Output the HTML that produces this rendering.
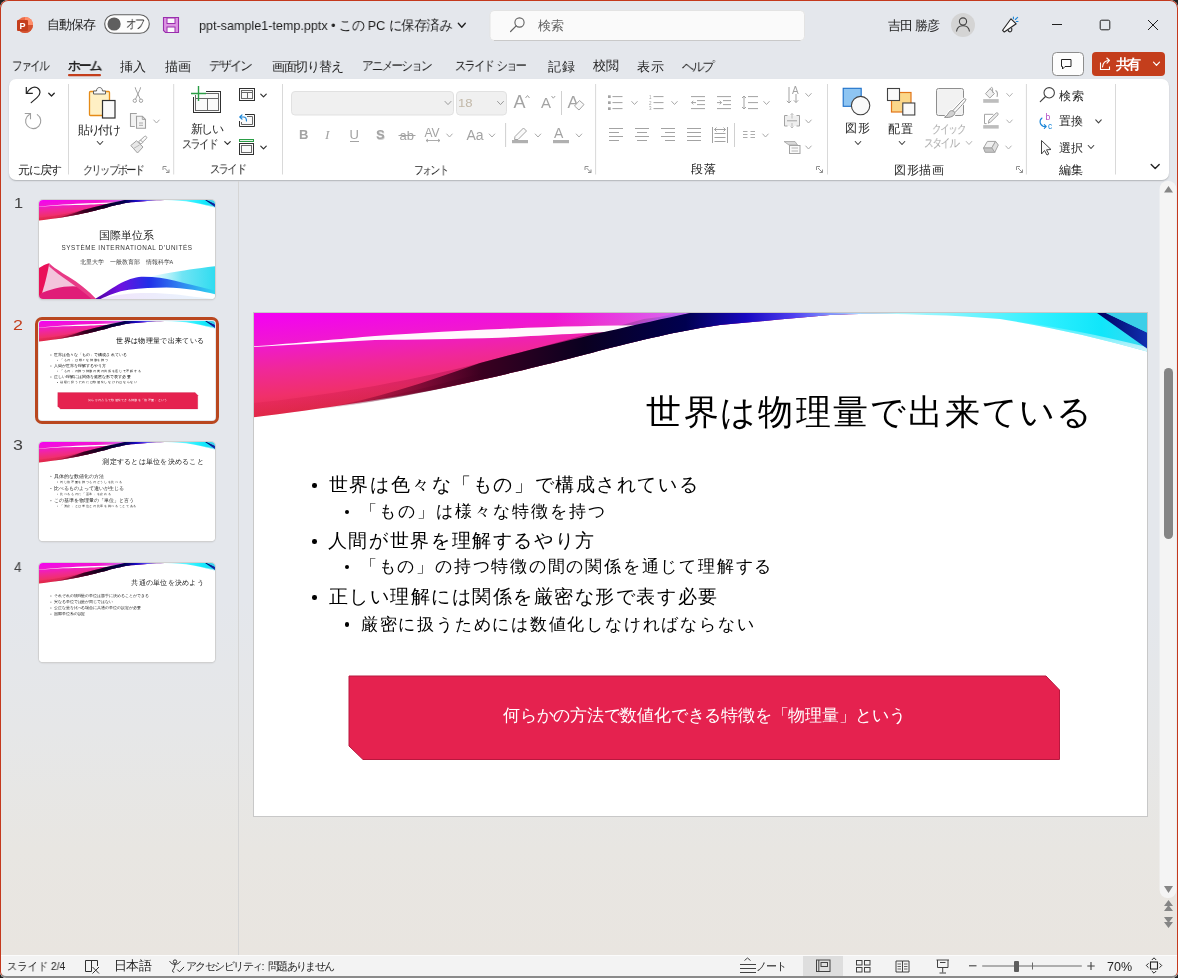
<!DOCTYPE html><html lang="ja"><head><meta charset="utf-8"><style>
html,body{margin:0;padding:0;width:1178px;height:978px;overflow:hidden;background:#202020;}
body{font-family:"Liberation Sans",sans-serif;color:#242424;position:relative;}
.abs{position:absolute;}
.t{position:absolute;white-space:nowrap;line-height:1;will-change:transform;}
.t i{display:inline-block;width:var(--w);text-align:center;font-style:normal}
#win{position:absolute;left:0;top:0;width:1178px;height:978px;border-radius:8px 8px 6px 6px;overflow:hidden;
 background:linear-gradient(180deg,#e4e7ec 0px,#e4e7ec 600px,#e6e7e8 730px,#e8e6e2 850px,#e9e5e0 955px);}
#ribbon{position:absolute;left:9px;top:79px;width:1160px;height:101px;background:#fff;border-radius:7px;box-shadow:0 1px 1.5px rgba(0,0,0,0.22);}
.sep{position:absolute;width:1px;background:#dadada;}
.slide{position:absolute;width:893px;height:503px;background:#fff;overflow:hidden;}
.thumb{position:absolute;left:39px;width:176px;height:99px;border-radius:4px;overflow:hidden;box-shadow:0 0 0 1px #d0d0d0,0 1px 2px rgba(0,0,0,0.15);background:#fff;}
.thumb .slide{transform:scale(0.19709);transform-origin:0 0;left:0;top:0}
svg{overflow:visible}

#border{position:absolute;left:0;top:0;width:1178px;height:978px;box-sizing:border-box;border:1px solid #c4391d;border-bottom:2px solid #8a8a8a;border-radius:8px 8px 6px 6px;pointer-events:none}
</style></head><body><div id="win"><div id="ribbon"></div><svg class="abs" style="left:0;top:0;z-index:2" width="1178" height="182"><rect x="68.0" y="84" width="1" height="90.5" fill="#d9d9d9"/><rect x="173.2" y="84" width="1" height="90.5" fill="#d9d9d9"/><rect x="282.0" y="84" width="1" height="90.5" fill="#d9d9d9"/><rect x="595.1" y="84" width="1" height="90.5" fill="#d9d9d9"/><rect x="827.0" y="84" width="1" height="90.5" fill="#d9d9d9"/><rect x="1025.9" y="84" width="1" height="90.5" fill="#d9d9d9"/><rect x="1115.0" y="84" width="1" height="90.5" fill="#d9d9d9"/><path d="M26.3,87 V93.3 H32.8" fill="none" stroke="#242424" stroke-width="1.2" stroke-linecap="butt" stroke-linejoin="miter"/><path d="M26.8,93 C29,89.6 31.5,87.2 34.6,87.2 C37.8,87.2 40,89.6 40,92.3 C40,94.5 38.8,96 37,97.6 L31.2,102.6" fill="none" stroke="#242424" stroke-width="1.2" stroke-linecap="round"/><path d="M48.75,93.19999999999999 L51.5,96.0 L54.25,93.19999999999999" fill="none" stroke="#242424" stroke-width="1.3" stroke-linecap="round" stroke-linejoin="round"/><path d="M37.3,114.6 A7.6,7.6 0 1 1 29.4,114.4 L30.3,113.7" fill="none" stroke="#9e9e9e" stroke-width="1.1" stroke-linecap="round"/><path d="M25.3,113.5 H30.5 V118.7" fill="none" stroke="#9e9e9e" stroke-width="1.1" stroke-linecap="square" stroke-linejoin="miter"/><rect x="89.5" y="91.5" width="20" height="24" rx="1" fill="#fff0c4" stroke="#e58b17" stroke-width="1.3"/><path d="M93.5,94 V91 H96.5 C96.5,88.5 98,87.5 99.5,87.5 C101,87.5 102.5,88.5 102.5,91 H105.5 V94 Z" fill="#fafafa" stroke="#616161" stroke-width="1"/><rect x="102.5" y="100.5" width="12.5" height="17.5" fill="#fafafa" stroke="#303030" stroke-width="1.2"/><path d="M97.25,141.5 L100,144.5 L102.75,141.5" fill="none" stroke="#424242" stroke-width="1.1" stroke-linecap="round" stroke-linejoin="round"/><circle cx="134.8" cy="100.7" r="1.7" fill="none" stroke="#a0a0a0" stroke-width="1"/><circle cx="141" cy="100.7" r="1.7" fill="none" stroke="#a0a0a0" stroke-width="1"/><path d="M135.5,99.2 L140,89.5 L140.6,87.3 M140.3,99.2 L135.8,89.5 L135.2,87.3" fill="none" stroke="#a0a0a0" stroke-width="1"/><path d="M134.8,126.5 H130.5 V113.5 H136.8" fill="#f2f2f2" stroke="#a0a0a0" stroke-width="1.1"/><path d="M136.5,116.3 H142.3 L145.5,119.5 V128.3 H136.5 Z" fill="#f4f4f4" stroke="#a0a0a0" stroke-width="1.1"/><path d="M142.3,116.3 V119.5 H145.5" fill="none" stroke="#a0a0a0" stroke-width="0.9"/><path d="M139,123 H143 M139,125.3 H143" stroke="#a0a0a0" stroke-width="0.9"/><path d="M153.75,120.0 L156.5,123.0 L159.25,120.0" fill="none" stroke="#a8a8a8" stroke-width="1" stroke-linecap="round" stroke-linejoin="round"/><path d="M130.8,145.5 L136.5,140.8 L143,147 L137.5,153 Z" fill="#e8e8e8" stroke="#a0a0a0" stroke-width="1"/><path d="M133.5,148.5 L139.5,145" stroke="#b8b8b8" stroke-width="1"/><path d="M138.5,141.8 L140.5,140 L142.8,142.3 L141,144.2 Z M140.2,140.4 L144.3,136.6 A1.3,1.3 0 0 1 146.3,138.6 L142.3,142.4" fill="#fafafa" stroke="#a0a0a0" stroke-width="1"/><rect x="193.5" y="91.5" width="27" height="21" fill="#fafafa" stroke="#303030" stroke-width="1"/><rect x="195.5" y="93.5" width="23" height="17" fill="none" stroke="#6a6a6a" stroke-width="1"/><path d="M195.5,98.5 H218.5 M207.5,98.5 V110.5" stroke="#6a6a6a" stroke-width="1"/><rect x="188" y="84" width="18" height="11" fill="#ffffff"/><rect x="191" y="92" width="4" height="5" fill="#ffffff"/><path d="M191,93.5 H206 M198.5,86 V101" stroke="#2a9d45" stroke-width="1.4"/><path d="M224.75,141.6 L227.5,144.4 L230.25,141.6" fill="none" stroke="#303030" stroke-width="1.2" stroke-linecap="round" stroke-linejoin="round"/><rect x="239.5" y="88.5" width="15" height="12" fill="#fafafa" stroke="#303030" stroke-width="1"/><rect x="241.5" y="90.5" width="11" height="8" fill="none" stroke="#6a6a6a" stroke-width="1"/><path d="M241.5,92.5 H252.5 M247.5,92.5 V98.5" stroke="#6a6a6a" stroke-width="1"/><path d="M260.75,94.1 L263.5,96.9 L266.25,94.1" fill="none" stroke="#303030" stroke-width="1.2" stroke-linecap="round" stroke-linejoin="round"/><path d="M245,114.5 H254.5 V126.5 H239.5 V121" fill="#fafafa" stroke="#303030" stroke-width="1"/><path d="M241.5,122 V124.5 H252.5 V116.5 H247" fill="none" stroke="#6a6a6a" stroke-width="1"/><path d="M242,114.8 L239.8,117 L242,119.2 M240,117 H243.5 C245.5,117 246.5,118.5 246.5,121" fill="none" stroke="#1a86d8" stroke-width="1.2" stroke-linecap="round" stroke-linejoin="round"/><rect x="239.5" y="139.5" width="14" height="2" fill="#e8f4ea" stroke="#2a9d45" stroke-width="1"/><rect x="239.5" y="143.5" width="14" height="11" fill="#fafafa" stroke="#303030" stroke-width="1"/><rect x="241.5" y="145.5" width="10" height="7" fill="none" stroke="#6a6a6a" stroke-width="1"/><path d="M260.75,146.1 L263.5,148.9 L266.25,146.1" fill="none" stroke="#303030" stroke-width="1.2" stroke-linecap="round" stroke-linejoin="round"/><path d="M163.0,170 V166.5 H166.5" fill="none" stroke="#8f8f8f" stroke-width="1"/><path d="M164.5,168 L169.0,172.5 M169.0,169.5 V172.5 H166.0" fill="none" stroke="#8f8f8f" stroke-width="1"/><rect x="291.5" y="91.5" width="162" height="23.5" rx="3.5" fill="#f0f0f0" stroke="#e1e1e1" stroke-width="1"/><path d="M445.0,101.4 L448,104.6 L451.0,101.4" fill="none" stroke="#9a9a9a" stroke-width="1" stroke-linecap="round" stroke-linejoin="round"/><rect x="456.5" y="91.5" width="50" height="23.5" rx="3.5" fill="#f0f0f0" stroke="#e1e1e1" stroke-width="1"/><path d="M497.5,101.4 L500.5,104.6 L503.5,101.4" fill="none" stroke="#9a9a9a" stroke-width="1" stroke-linecap="round" stroke-linejoin="round"/><text x="513.5" y="108.3" font-family="Liberation Sans" font-size="18" fill="#a3a3a3">A</text><path d="M525.5,98 L527.5,95.5 L529.5,98" fill="none" stroke="#a3a3a3" stroke-width="1"/><text x="541" y="108.3" font-family="Liberation Sans" font-size="15" fill="#a3a3a3">A</text><path d="M551.5,96 L553.3,98.2 L555.2,96" fill="none" stroke="#a3a3a3" stroke-width="1"/><rect x="561.0" y="91" width="1" height="24" fill="#d0d0d0"/><text x="567.5" y="108.3" font-family="Liberation Sans" font-size="17" fill="#a3a3a3">A</text><path d="M574.5,106 L579.5,100.5 L584,104.5 L579,110 Z" fill="#fafafa" stroke="#a3a3a3" stroke-width="1"/><text x="299" y="139.2" font-family="Liberation Sans" font-weight="700" font-size="13" fill="#a3a3a3">B</text><text x="325" y="139.2" font-family="Liberation Serif" font-style="italic" font-size="13.5" fill="#a3a3a3">I</text><text x="349.5" y="139" font-family="Liberation Sans" font-size="13" fill="#a3a3a3">U</text><rect x="350" y="141" width="9" height="1" fill="#a3a3a3"/><text x="376.5" y="140" font-family="Liberation Sans" font-weight="700" font-size="13" fill="#d0d0d0">S</text><text x="376" y="139.2" font-family="Liberation Sans" font-weight="700" font-size="13" fill="#a3a3a3">S</text><text x="399.5" y="139.5" font-family="Liberation Sans" font-size="13" fill="#a3a3a3">ab</text><rect x="398.5" y="135" width="17" height="1" fill="#a3a3a3"/><text x="424.5" y="137" font-family="Liberation Sans" font-size="12" fill="#a3a3a3">AV</text><path d="M426,140.5 H440 M428,139 L426,140.5 L428,142 M438,139 L440,140.5 L438,142" fill="none" stroke="#a3a3a3" stroke-width="0.9"/><path d="M446.75,134.0 L449.5,137.0 L452.25,134.0" fill="none" stroke="#a8a8a8" stroke-width="1" stroke-linecap="round" stroke-linejoin="round"/><text x="466.5" y="140" font-family="Liberation Sans" font-size="14" fill="#a3a3a3">Aa</text><path d="M489.25,134.0 L492,137.0 L494.75,134.0" fill="none" stroke="#a8a8a8" stroke-width="1" stroke-linecap="round" stroke-linejoin="round"/><rect x="505.1" y="123" width="1" height="24" fill="#d0d0d0"/><path d="M515,136.5 L523.5,128 L526.5,131 L518,139.5 L514.5,139.5 Z" fill="#fafafa" stroke="#a3a3a3" stroke-width="1"/><rect x="512" y="140" width="16" height="3.2" fill="#b0b0b0"/><path d="M535.25,134.0 L538,137.0 L540.75,134.0" fill="none" stroke="#a8a8a8" stroke-width="1" stroke-linecap="round" stroke-linejoin="round"/><text x="554" y="137.8" font-family="Liberation Sans" font-size="14" fill="#a3a3a3">A</text><rect x="553" y="140" width="16" height="3.2" fill="#b0b0b0"/><path d="M576.25,134.0 L579,137.0 L581.75,134.0" fill="none" stroke="#a8a8a8" stroke-width="1" stroke-linecap="round" stroke-linejoin="round"/><path d="M585.0,170 V166.5 H588.5" fill="none" stroke="#8f8f8f" stroke-width="1"/><path d="M586.5,168 L591.0,172.5 M591.0,169.5 V172.5 H588.0" fill="none" stroke="#8f8f8f" stroke-width="1"/><rect x="608" y="95.3" width="2.7" height="2.7" fill="#a3a3a3"/><rect x="608" y="101.3" width="2.7" height="2.7" fill="#a3a3a3"/><rect x="608" y="107.3" width="2.7" height="2.7" fill="#a3a3a3"/><path d="M612.5,96.6 H622.5 M612.5,102.6 H622.5 M612.5,108.6 H622.5" stroke="#a3a3a3" stroke-width="1"/><path d="M631.75,101.5 L634.5,104.5 L637.25,101.5" fill="none" stroke="#a8a8a8" stroke-width="1" stroke-linecap="round" stroke-linejoin="round"/><text x="649" y="98.5" font-family="Liberation Sans" font-size="4.5" fill="#a3a3a3">1</text><text x="649" y="104.5" font-family="Liberation Sans" font-size="4.5" fill="#a3a3a3">2</text><text x="649" y="110.3" font-family="Liberation Sans" font-size="4.5" fill="#a3a3a3">3</text><path d="M653.5,96.6 H663.5 M653.5,102.6 H663.5 M653.5,108.6 H663.5" stroke="#a3a3a3" stroke-width="1"/><path d="M671.75,101.5 L674.5,104.5 L677.25,101.5" fill="none" stroke="#a8a8a8" stroke-width="1" stroke-linecap="round" stroke-linejoin="round"/><path d="M691,96.6 H705 M697,100.6 H705 M697,104.6 H705 M691,108.6 H705 M691.5,102.6 H696 M693.3,100.8 L691.5,102.6 L693.3,104.4" fill="none" stroke="#a3a3a3" stroke-width="1"/><path d="M717,96.6 H731 M723,100.6 H731 M723,104.6 H731 M717,108.6 H731 M717,102.6 H721.5 M719.7,100.8 L721.5,102.6 L719.7,104.4" fill="none" stroke="#a3a3a3" stroke-width="1"/><path d="M744,96 V109 M742,98 L744,96 L746,98 M742,107 L744,109 L746,107 M748,96.6 H758 M748,102.6 H758 M748,108.6 H758" fill="none" stroke="#a3a3a3" stroke-width="1"/><path d="M763.75,101.5 L766.5,104.5 L769.25,101.5" fill="none" stroke="#a8a8a8" stroke-width="1" stroke-linecap="round" stroke-linejoin="round"/><rect x="609" y="128.0" width="14" height="1" fill="#a3a3a3"/><rect x="609" y="132.0" width="10" height="1" fill="#a3a3a3"/><rect x="609" y="136.0" width="14" height="1" fill="#a3a3a3"/><rect x="609" y="140.0" width="10" height="1" fill="#a3a3a3"/><rect x="635.0" y="128.0" width="14" height="1" fill="#a3a3a3"/><rect x="637.0" y="132.0" width="10" height="1" fill="#a3a3a3"/><rect x="635.0" y="136.0" width="14" height="1" fill="#a3a3a3"/><rect x="637.0" y="140.0" width="10" height="1" fill="#a3a3a3"/><rect x="661" y="128.0" width="14" height="1" fill="#a3a3a3"/><rect x="665" y="132.0" width="10" height="1" fill="#a3a3a3"/><rect x="661" y="136.0" width="14" height="1" fill="#a3a3a3"/><rect x="665" y="140.0" width="10" height="1" fill="#a3a3a3"/><rect x="687" y="128.0" width="14" height="1" fill="#a3a3a3"/><rect x="687" y="132.0" width="14" height="1" fill="#a3a3a3"/><rect x="687" y="136.0" width="14" height="1" fill="#a3a3a3"/><rect x="687" y="140.0" width="14" height="1" fill="#a3a3a3"/><path d="M712.5,127 V143 M727.5,127 V143 M714.5,133.5 H725.5 M714.5,137.5 H725.5 M714.5,141.5 H725.5 M714.5,129.5 H725.5 M716.5,127.5 L714.5,129.5 L716.5,131.5 M723.5,127.5 L725.5,129.5 L723.5,131.5" fill="none" stroke="#a3a3a3" stroke-width="1"/><rect x="734.0" y="123" width="1" height="24" fill="#d0d0d0"/><path d="M743,131.5 H747.5 M750.5,131.5 H755 M743,134.5 H747.5 M750.5,134.5 H755 M743,137.5 H747.5 M750.5,137.5 H755" stroke="#a3a3a3" stroke-width="0.9"/><path d="M762.75,134.0 L765.5,137.0 L768.25,134.0" fill="none" stroke="#a8a8a8" stroke-width="1" stroke-linecap="round" stroke-linejoin="round"/><path d="M789,87 V103 M786.8,100.8 L789,103 L791.2,100.8 M796,94 V102.5 M793.8,100.3 L796,102.5 L798.2,100.3" fill="none" stroke="#a3a3a3" stroke-width="1"/><text x="792" y="94" font-family="Liberation Sans" font-size="10" fill="#a3a3a3">A</text><path d="M805.75,93.5 L808.5,96.5 L811.25,93.5" fill="none" stroke="#a8a8a8" stroke-width="1" stroke-linecap="round" stroke-linejoin="round"/><rect x="785" y="115.5" width="14.5" height="10.5" fill="#efefef"/><path d="M787.5,115.5 H784.5 V126 H787.5 M796.5,115.5 H799.5 V126 H796.5 M787,120.8 H797" fill="none" stroke="#a3a3a3" stroke-width="1"/><path d="M792,113.5 V118.5 M790.5,115 L792,113.5 L793.5,115 M792,123 V128 M790.5,126.5 L792,128 L793.5,126.5" fill="none" stroke="#b8b8b8" stroke-width="0.9"/><path d="M805.75,120.0 L808.5,123.0 L811.25,120.0" fill="none" stroke="#a8a8a8" stroke-width="1" stroke-linecap="round" stroke-linejoin="round"/><path d="M784,141.5 H795 L797.5,145 H789 Z" fill="#d8d8d8" stroke="#a3a3a3" stroke-width="0.8"/><rect x="789.5" y="145.5" width="10.5" height="8" fill="#fafafa" stroke="#a3a3a3" stroke-width="1"/><path d="M791.5,148 H798 M791.5,151 H798" stroke="#a3a3a3" stroke-width="0.8"/><path d="M805.75,146.0 L808.5,149.0 L811.25,146.0" fill="none" stroke="#a8a8a8" stroke-width="1" stroke-linecap="round" stroke-linejoin="round"/><path d="M816.5,170 V166.5 H820" fill="none" stroke="#8f8f8f" stroke-width="1"/><path d="M818,168 L822.5,172.5 M822.5,169.5 V172.5 H819.5" fill="none" stroke="#8f8f8f" stroke-width="1"/><rect x="843.2" y="88.3" width="18" height="18" fill="#8ec5f2" stroke="#1c6fc9" stroke-width="1.1"/><circle cx="860.6" cy="105.6" r="9.2" fill="#fafafa" stroke="#424242" stroke-width="1.1"/><path d="M855.25,141.5 L858,144.5 L860.75,141.5" fill="none" stroke="#424242" stroke-width="1.1" stroke-linecap="round" stroke-linejoin="round"/><rect x="891.5" y="92.5" width="19.5" height="19.5" fill="#fbd78a" stroke="#e2761a" stroke-width="1.2"/><rect x="887.5" y="88.5" width="12" height="12" fill="#fafafa" stroke="#424242" stroke-width="1.1"/><rect x="902.8" y="103" width="12" height="12" fill="#fafafa" stroke="#424242" stroke-width="1.1"/><path d="M899.25,141.5 L902,144.5 L904.75,141.5" fill="none" stroke="#424242" stroke-width="1.1" stroke-linecap="round" stroke-linejoin="round"/><rect x="936.5" y="88.5" width="27" height="27" rx="2" fill="#f2f2f2" stroke="#8e8e8e" stroke-width="1"/><path d="M952.5,111 L963.3,99.5 C964.5,98.2 966,98.6 965.8,99.8 C965.5,101 964,103 955,112.5 C954.5,116 951,118 944.5,117.3 C947.5,115.8 948.5,112.5 949.8,111.3 C950.6,110.6 951.6,110.5 952.5,111 Z" fill="#fff" stroke="#fff" stroke-width="2.6" stroke-linejoin="round"/><path d="M952.5,111 L963.3,99.5 C964.5,98.2 966,98.6 965.8,99.8 C965.5,101 964,103 955,112.5" fill="#fafafa" stroke="#8e8e8e" stroke-width="1"/><path d="M955,112.5 C954.5,116 951,118 944.5,117.3 C947.5,115.8 948.5,112.5 949.8,111.3 C950.6,110.6 952.5,110 955,112.5 Z" fill="#d2d2d2" stroke="#8e8e8e" stroke-width="1" stroke-linejoin="round"/><path d="M966.25,141.5 L969,144.5 L971.75,141.5" fill="none" stroke="#b0b0b0" stroke-width="1" stroke-linecap="round" stroke-linejoin="round"/><path d="M985.5,93.7 L990.2,88.6 L994.4,93.7 L989.8,98 Z" fill="#efefef" stroke="#a3a3a3" stroke-width="1" stroke-linejoin="round"/><path d="M990.5,89.5 C990.5,87 992.5,86.5 992.6,89 V92.5" fill="none" stroke="#a3a3a3" stroke-width="1"/><path d="M995.5,90.5 C997.5,91.5 997.8,94 997,96.8" fill="none" stroke="#a3a3a3" stroke-width="1.1"/><rect x="983.2" y="99.1" width="15.5" height="3.7" fill="#bdbdbd"/><path d="M1006.75,93.5 L1009.5,96.5 L1012.25,93.5" fill="none" stroke="#b0b0b0" stroke-width="1" stroke-linecap="round" stroke-linejoin="round"/><path d="M993.3,114.3 H984.5 V123.6 H986.6" fill="none" stroke="#a3a3a3" stroke-width="1"/><path d="M988.3,123.3 L989,120 L996.2,113 A1.3,1.3 0 0 1 998,114.8 L990.8,121.8 Z" fill="#efefef" stroke="#a3a3a3" stroke-width="1" stroke-linejoin="round"/><rect x="983.2" y="125.1" width="15.5" height="3.5" fill="#bdbdbd"/><path d="M1006.75,120.0 L1009.5,123.0 L1012.25,120.0" fill="none" stroke="#b0b0b0" stroke-width="1" stroke-linecap="round" stroke-linejoin="round"/><path d="M983.5,148 L987.4,141.4 H995.6 L991.7,148 Z" fill="#f0f0f0" stroke="#a3a3a3" stroke-width="1" stroke-linejoin="round"/><path d="M995.6,141.4 L998.3,145 L994.8,152.3 L991.7,148 Z" fill="#e0e0e0" stroke="#a3a3a3" stroke-width="1" stroke-linejoin="round"/><path d="M983.5,148 H991.7 L994.8,152.3 H985.1 Z" fill="#c4c4c4" stroke="#a3a3a3" stroke-width="1" stroke-linejoin="round"/><path d="M1005.75,146.0 L1008.5,149.0 L1011.25,146.0" fill="none" stroke="#b0b0b0" stroke-width="1" stroke-linecap="round" stroke-linejoin="round"/><path d="M1016.5,170 V166.5 H1020" fill="none" stroke="#8f8f8f" stroke-width="1"/><path d="M1018,168 L1022.5,172.5 M1022.5,169.5 V172.5 H1019.5" fill="none" stroke="#8f8f8f" stroke-width="1"/><circle cx="1049.2" cy="92.8" r="5.2" fill="none" stroke="#424242" stroke-width="1.1"/><path d="M1045.5,96.5 L1040.3,101.7" stroke="#424242" stroke-width="1.2" stroke-linecap="round"/><text x="1045.5" y="119.8" font-family="Liberation Sans" font-size="8.5" fill="#b146c2">b</text><text x="1048" y="128.5" font-family="Liberation Sans" font-size="8.5" fill="#1a86d8">c</text><path d="M1042,118 C1039,120 1039.5,125 1043.5,126.5 L1046,126.5 M1044.3,124.6 L1046.2,126.5 L1044.3,128.4" fill="none" stroke="#1a86d8" stroke-width="1.1" stroke-linecap="round" stroke-linejoin="round"/><path d="M1041.5,140.5 L1041.5,154 L1044.5,150.5 L1047,155 L1048.8,154 L1046.5,149.8 L1051,149.5 Z" fill="#fafafa" stroke="#424242" stroke-width="1" stroke-linejoin="round"/><path d="M1095.75,119.8 L1098.5,122.8 L1101.25,119.8" fill="none" stroke="#424242" stroke-width="1.1" stroke-linecap="round" stroke-linejoin="round"/><path d="M1088.25,145.5 L1091,148.5 L1093.75,145.5" fill="none" stroke="#424242" stroke-width="1.1" stroke-linecap="round" stroke-linejoin="round"/><path d="M1151.2,164.4 L1155.2,168.6 L1159.2,164.4" fill="none" stroke="#242424" stroke-width="1.4" stroke-linecap="round" stroke-linejoin="round"/></svg><div class="abs" style="left:237.5px;top:181px;width:1px;height:774px;background:#d5d5d5"></div><div class="slide" style="left:254px;top:313px;box-shadow:0 0 0 1px #c8c8c8"><svg class="abs" style="left:0;top:0" width="893" height="120" viewBox="0 0 893 120">
<defs>
<linearGradient id="gmmain" gradientUnits="userSpaceOnUse" x1="0" y1="0" x2="8" y2="105">
 <stop offset="0" stop-color="#f400f4"/><stop offset="0.3" stop-color="#f018d0"/><stop offset="0.55" stop-color="#f02898"/><stop offset="0.8" stop-color="#f0306a"/><stop offset="1" stop-color="#e42e48"/>
</linearGradient>
<linearGradient id="gdmain" x1="0" y1="0" x2="1" y2="0">
 <stop offset="0" stop-color="#500010" stop-opacity="0"/><stop offset="0.35" stop-color="#500018" stop-opacity="0.55"/><stop offset="0.7" stop-color="#1a0010" stop-opacity="0.95"/><stop offset="1" stop-color="#000030"/>
</linearGradient>
<linearGradient id="gnmain" gradientUnits="userSpaceOnUse" x1="60" y1="0" x2="660" y2="0">
 <stop offset="0" stop-color="#800030" stop-opacity="0"/><stop offset="0.14" stop-color="#6a0028" stop-opacity="0.6"/><stop offset="0.28" stop-color="#3a0020"/><stop offset="0.45" stop-color="#0a0020"/><stop offset="0.62" stop-color="#000050"/><stop offset="0.72" stop-color="#1808c0"/><stop offset="0.8" stop-color="#5040f0"/><stop offset="0.88" stop-color="#90b0ff"/><stop offset="1" stop-color="#a0f4ff"/>
</linearGradient>
<linearGradient id="gcmain" gradientUnits="userSpaceOnUse" x1="590" y1="0" x2="893" y2="0">
 <stop offset="0" stop-color="#d8fcff"/><stop offset="0.3" stop-color="#90f6ff"/><stop offset="0.65" stop-color="#30f0ff"/><stop offset="0.85" stop-color="#10e6fa"/><stop offset="1" stop-color="#40d8f0"/>
</linearGradient>
<linearGradient id="gcwmain" gradientUnits="userSpaceOnUse" x1="0" y1="5" x2="0" y2="38">
 <stop offset="0" stop-color="#ffffff" stop-opacity="0"/><stop offset="1" stop-color="#ffffff" stop-opacity="0.75"/>
</linearGradient>
<linearGradient id="gsmain" x1="0" y1="0" x2="1" y2="0">
 <stop offset="0" stop-color="#000060"/><stop offset="1" stop-color="#1030b0"/>
</linearGradient>
<linearGradient id="gshmain" gradientUnits="userSpaceOnUse" x1="0" y1="0" x2="440" y2="0">
 <stop offset="0" stop-color="#c00030" stop-opacity="0.12"/><stop offset="0.35" stop-color="#900030" stop-opacity="0.22"/><stop offset="0.6" stop-color="#600028" stop-opacity="0.38"/><stop offset="1" stop-color="#300040" stop-opacity="0.5"/>
</linearGradient>
<linearGradient id="gsh2main" gradientUnits="userSpaceOnUse" x1="80" y1="0" x2="380" y2="0">
 <stop offset="0" stop-color="#600020" stop-opacity="0"/><stop offset="0.45" stop-color="#500018" stop-opacity="0.4"/><stop offset="1" stop-color="#200018" stop-opacity="0.7"/>
</linearGradient>
<linearGradient id="gpu2main" gradientUnits="userSpaceOnUse" x1="300" y1="0" x2="436" y2="0">
 <stop offset="0" stop-color="#e080ff" stop-opacity="0"/><stop offset="1" stop-color="#c890ff" stop-opacity="0.75"/>
</linearGradient>
<linearGradient id="gpumain" gradientUnits="userSpaceOnUse" x1="250" y1="0" x2="436" y2="0">
 <stop offset="0" stop-color="#8000c0" stop-opacity="0"/><stop offset="1" stop-color="#8000d0" stop-opacity="0.7"/>
</linearGradient>
</defs>
<path d="M0,0 L660,0 C630,0.5 600,1 576,2 C540,5 500,9 466,12 C430,17 400,24 346,37.5 C330,42 280,55 226,67 C150,84 60,97 0,104.3 Z" fill="url(#gmmain)"/>
<path d="M0,90 C60,84 150,70 226,50 C280,36 330,22 390,6 L436,0 L660,0 C630,0.5 600,1 576,2 C540,5 500,9 466,12 C430,17 400,24 346,37.5 C330,42 280,55 226,67 C150,84 60,97 0,104.3 Z" fill="url(#gshmain)"/>
<path d="M80,93 C140,84 190,70 240,57 C300,40 340,30 380,20 L466,12 C430,17 400,24 346,37.5 C330,42 280,55 226,67 C170,80 120,89 80,95 Z" fill="url(#gsh2main)"/>
<path d="M290,34 C350,20 390,9 420,0 L436,0 C380,12 330,24 290,34 Z" fill="url(#gpumain)"/>
<path d="M300,0 L436,0 C420,4 405,8 392,12 C360,12 330,13 300,14 Z" fill="url(#gpu2main)"/>
<path d="M0,33.3 C40,30.5 90,25.5 121,23 C170,19.5 210,17.5 246,16 C300,13.5 350,12.5 392,12.3 L392,17 C330,20 290,22.5 246,24.7 C200,26 160,26.5 121,27 C80,29 40,32 0,34 Z" fill="#ffffff" opacity="0.97"/>
<path d="M60,97 C120,87 175,68 226,50 C300,30 380,12 436,0 L660,0 C630,0.5 600,1 576,2 C540,5 500,9 466,12 C430,17 400,24 346,37.5 C330,42 280,55 226,67 C150,84 100,92 60,97 Z" fill="url(#gnmain)"/>
<path d="M590,0 L893,0 L893,38.5 C846,25 796,14 746,6 C700,2 650,1 590,0 Z" fill="url(#gcmain)"/>
<path d="M700,2 C760,6 820,16 893,34 L893,38.5 C846,25 796,14 746,6 C720,4 710,3 700,2 Z" fill="url(#gcwmain)"/>
<path d="M843,0 L852,0 L893,19.5 L893,35.5 Z" fill="url(#gsmain)"/>
<path d="M852,0 L893,0 L893,19.5 Z" fill="#3ccfe8"/>
</svg><div class="abs" style="left:58px;top:170.2px;width:4.6px;height:4.6px;border-radius:50%;background:#000"></div><div class="abs" style="left:58px;top:226.2px;width:4.6px;height:4.6px;border-radius:50%;background:#000"></div><div class="abs" style="left:58px;top:282.2px;width:4.6px;height:4.6px;border-radius:50%;background:#000"></div><div class="abs" style="left:91px;top:196.9px;width:4.2px;height:4.2px;border-radius:50%;background:#000"></div><div class="abs" style="left:91px;top:251.9px;width:4.2px;height:4.2px;border-radius:50%;background:#000"></div><div class="abs" style="left:91px;top:309.4px;width:4.2px;height:4.2px;border-radius:50%;background:#000"></div><svg class="abs" style="left:0;top:0" width="893" height="503"><path d="M95,363 L792,363 L805.5,377 L805.5,446.5 L109,446.5 L95,433 Z" fill="#e5224f" stroke="#b8183e" stroke-width="1"/></svg><div class="t" style="left:391.25px;top:80.50px;font-size:35.00px;--w:37.35px;color:#000000;font-weight:400;"><i>世</i><i>界</i><i>は</i><i>物</i><i>理</i><i>量</i><i>で</i><i>出</i><i>来</i><i>て</i><i>い</i><i>る</i></div><div class="t" style="left:74.08px;top:163.25px;font-size:18.50px;--w:20.59px;color:#000000;font-weight:400;"><i>世</i><i>界</i><i>は</i><i>色</i><i>々</i><i>な</i><i>「</i><i>も</i><i>の</i><i>」</i><i>で</i><i>構</i><i>成</i><i>さ</i><i>れ</i><i>て</i><i>い</i><i>る</i></div><div class="t" style="left:105.15px;top:189.50px;font-size:17.00px;--w:18.99px;color:#000000;font-weight:400;"><i>「</i><i>も</i><i>の</i><i>」</i><i>は</i><i>様</i><i>々</i><i>な</i><i>特</i><i>徴</i><i>を</i><i>持</i><i>つ</i></div><div class="t" style="left:73.08px;top:219.25px;font-size:18.50px;--w:20.64px;color:#000000;font-weight:400;"><i>人</i><i>間</i><i>が</i><i>世</i><i>界</i><i>を</i><i>理</i><i>解</i><i>す</i><i>る</i><i>や</i><i>り</i><i>方</i></div><div class="t" style="left:105.15px;top:244.50px;font-size:17.00px;--w:18.79px;color:#000000;font-weight:400;"><i>「</i><i>も</i><i>の</i><i>」</i><i>の</i><i>持</i><i>つ</i><i>特</i><i>徴</i><i>の</i><i>間</i><i>の</i><i>関</i><i>係</i><i>を</i><i>通</i><i>じ</i><i>て</i><i>理</i><i>解</i><i>す</i><i>る</i></div><div class="t" style="left:74.08px;top:275.25px;font-size:18.50px;--w:20.53px;color:#000000;font-weight:400;"><i>正</i><i>し</i><i>い</i><i>理</i><i>解</i><i>に</i><i>は</i><i>関</i><i>係</i><i>を</i><i>厳</i><i>密</i><i>な</i><i>形</i><i>で</i><i>表</i><i>す</i><i>必</i><i>要</i></div><div class="t" style="left:106.15px;top:302.50px;font-size:17.00px;--w:18.79px;color:#000000;font-weight:400;"><i>厳</i><i>密</i><i>に</i><i>扱</i><i>う</i><i>た</i><i>め</i><i>に</i><i>は</i><i>数</i><i>値</i><i>化</i><i>し</i><i>な</i><i>け</i><i>れ</i><i>ば</i><i>な</i><i>ら</i><i>な</i><i>い</i></div><div class="t" style="left:249.18px;top:394.25px;font-size:16.50px;--w:16.79px;color:#ffffff;font-weight:400;"><i>何</i><i>ら</i><i>か</i><i>の</i><i>方</i><i>法</i><i>で</i><i>数</i><i>値</i><i>化</i><i>で</i><i>き</i><i>る</i><i>特</i><i>徴</i><i>を</i><i>「</i><i>物</i><i>理</i><i>量</i><i>」</i><i>と</i><i>い</i><i>う</i></div></div><div class="thumb" style="top:200px"><div class="slide"><svg class="abs" style="left:0;top:0" width="893" height="120" viewBox="0 0 893 120">
<defs>
<linearGradient id="gmt1" gradientUnits="userSpaceOnUse" x1="0" y1="0" x2="8" y2="105">
 <stop offset="0" stop-color="#f400f4"/><stop offset="0.3" stop-color="#f018d0"/><stop offset="0.55" stop-color="#f02898"/><stop offset="0.8" stop-color="#f0306a"/><stop offset="1" stop-color="#e42e48"/>
</linearGradient>
<linearGradient id="gdt1" x1="0" y1="0" x2="1" y2="0">
 <stop offset="0" stop-color="#500010" stop-opacity="0"/><stop offset="0.35" stop-color="#500018" stop-opacity="0.55"/><stop offset="0.7" stop-color="#1a0010" stop-opacity="0.95"/><stop offset="1" stop-color="#000030"/>
</linearGradient>
<linearGradient id="gnt1" gradientUnits="userSpaceOnUse" x1="60" y1="0" x2="660" y2="0">
 <stop offset="0" stop-color="#800030" stop-opacity="0"/><stop offset="0.14" stop-color="#6a0028" stop-opacity="0.6"/><stop offset="0.28" stop-color="#3a0020"/><stop offset="0.45" stop-color="#0a0020"/><stop offset="0.62" stop-color="#000050"/><stop offset="0.72" stop-color="#1808c0"/><stop offset="0.8" stop-color="#5040f0"/><stop offset="0.88" stop-color="#90b0ff"/><stop offset="1" stop-color="#a0f4ff"/>
</linearGradient>
<linearGradient id="gct1" gradientUnits="userSpaceOnUse" x1="590" y1="0" x2="893" y2="0">
 <stop offset="0" stop-color="#d8fcff"/><stop offset="0.3" stop-color="#90f6ff"/><stop offset="0.65" stop-color="#30f0ff"/><stop offset="0.85" stop-color="#10e6fa"/><stop offset="1" stop-color="#40d8f0"/>
</linearGradient>
<linearGradient id="gcwt1" gradientUnits="userSpaceOnUse" x1="0" y1="5" x2="0" y2="38">
 <stop offset="0" stop-color="#ffffff" stop-opacity="0"/><stop offset="1" stop-color="#ffffff" stop-opacity="0.75"/>
</linearGradient>
<linearGradient id="gst1" x1="0" y1="0" x2="1" y2="0">
 <stop offset="0" stop-color="#000060"/><stop offset="1" stop-color="#1030b0"/>
</linearGradient>
<linearGradient id="gsht1" gradientUnits="userSpaceOnUse" x1="0" y1="0" x2="440" y2="0">
 <stop offset="0" stop-color="#c00030" stop-opacity="0.12"/><stop offset="0.35" stop-color="#900030" stop-opacity="0.22"/><stop offset="0.6" stop-color="#600028" stop-opacity="0.38"/><stop offset="1" stop-color="#300040" stop-opacity="0.5"/>
</linearGradient>
<linearGradient id="gsh2t1" gradientUnits="userSpaceOnUse" x1="80" y1="0" x2="380" y2="0">
 <stop offset="0" stop-color="#600020" stop-opacity="0"/><stop offset="0.45" stop-color="#500018" stop-opacity="0.4"/><stop offset="1" stop-color="#200018" stop-opacity="0.7"/>
</linearGradient>
<linearGradient id="gpu2t1" gradientUnits="userSpaceOnUse" x1="300" y1="0" x2="436" y2="0">
 <stop offset="0" stop-color="#e080ff" stop-opacity="0"/><stop offset="1" stop-color="#c890ff" stop-opacity="0.75"/>
</linearGradient>
<linearGradient id="gput1" gradientUnits="userSpaceOnUse" x1="250" y1="0" x2="436" y2="0">
 <stop offset="0" stop-color="#8000c0" stop-opacity="0"/><stop offset="1" stop-color="#8000d0" stop-opacity="0.7"/>
</linearGradient>
</defs>
<path d="M0,0 L660,0 C630,0.5 600,1 576,2 C540,5 500,9 466,12 C430,17 400,24 346,37.5 C330,42 280,55 226,67 C150,84 60,97 0,104.3 Z" fill="url(#gmt1)"/>
<path d="M0,90 C60,84 150,70 226,50 C280,36 330,22 390,6 L436,0 L660,0 C630,0.5 600,1 576,2 C540,5 500,9 466,12 C430,17 400,24 346,37.5 C330,42 280,55 226,67 C150,84 60,97 0,104.3 Z" fill="url(#gsht1)"/>
<path d="M80,93 C140,84 190,70 240,57 C300,40 340,30 380,20 L466,12 C430,17 400,24 346,37.5 C330,42 280,55 226,67 C170,80 120,89 80,95 Z" fill="url(#gsh2t1)"/>
<path d="M290,34 C350,20 390,9 420,0 L436,0 C380,12 330,24 290,34 Z" fill="url(#gput1)"/>
<path d="M300,0 L436,0 C420,4 405,8 392,12 C360,12 330,13 300,14 Z" fill="url(#gpu2t1)"/>
<path d="M0,33.3 C40,30.5 90,25.5 121,23 C170,19.5 210,17.5 246,16 C300,13.5 350,12.5 392,12.3 L392,17 C330,20 290,22.5 246,24.7 C200,26 160,26.5 121,27 C80,29 40,32 0,34 Z" fill="#ffffff" opacity="0.97"/>
<path d="M60,97 C120,87 175,68 226,50 C300,30 380,12 436,0 L660,0 C630,0.5 600,1 576,2 C540,5 500,9 466,12 C430,17 400,24 346,37.5 C330,42 280,55 226,67 C150,84 100,92 60,97 Z" fill="url(#gnt1)"/>
<path d="M590,0 L893,0 L893,38.5 C846,25 796,14 746,6 C700,2 650,1 590,0 Z" fill="url(#gct1)"/>
<path d="M700,2 C760,6 820,16 893,34 L893,38.5 C846,25 796,14 746,6 C720,4 710,3 700,2 Z" fill="url(#gcwt1)"/>
<path d="M843,0 L852,0 L893,19.5 L893,35.5 Z" fill="url(#gst1)"/>
<path d="M852,0 L893,0 L893,19.5 Z" fill="#3ccfe8"/>
</svg><svg class="abs" style="left:0;top:0" width="893" height="503" viewBox="0 0 893 503">
<defs>
<linearGradient id="p1t1" gradientUnits="userSpaceOnUse" x1="0" y1="320" x2="280" y2="503"><stop offset="0" stop-color="#f01868"/><stop offset="0.6" stop-color="#e0106a"/><stop offset="1" stop-color="#b00880"/></linearGradient>
<linearGradient id="w1t1" gradientUnits="userSpaceOnUse" x1="285" y1="0" x2="893" y2="0"><stop offset="0" stop-color="#5000a0"/><stop offset="0.2" stop-color="#7010e0"/><stop offset="0.45" stop-color="#2030e8"/><stop offset="0.7" stop-color="#3080f0"/><stop offset="1" stop-color="#30d8f0"/></linearGradient>
<linearGradient id="cy1t1" gradientUnits="userSpaceOnUse" x1="560" y1="0" x2="893" y2="0"><stop offset="0" stop-color="#c0f4fc" stop-opacity="0.3"/><stop offset="0.5" stop-color="#70e4f4"/><stop offset="1" stop-color="#30dcf0"/></linearGradient>
<linearGradient id="lv1t1" gradientUnits="userSpaceOnUse" x1="300" y1="0" x2="893" y2="0"><stop offset="0" stop-color="#e8d0f8"/><stop offset="1" stop-color="#d8f0fc"/></linearGradient>
</defs>
<path d="M520,400 C600,378 700,360 893,336 L893,470 C800,440 700,420 560,420 Z" fill="url(#cy1t1)"/>
<path d="M300,503 C420,470 560,465 700,480 C780,490 850,500 893,503 Z" fill="url(#lv1t1)" opacity="0.6"/>
<path d="M282,503 C340,470 380,440 416,421 C460,400 500,390 531,390 C590,390 640,398 685,409 C760,428 830,446 893,459 L893,478 C830,462 740,446 646,444 C580,444 520,448 455,455 C400,462 350,485 310,503 Z" fill="url(#w1t1)"/>
<path d="M0,345 C18,334 35,325 52,321 C62,330 70,345 79,354 C120,380 160,400 186,416 C230,446 260,475 290,503 L0,503 Z" fill="#f3c4dc"/>
<path d="M0,478 C60,450 140,430 210,440 C240,455 265,480 290,503 L0,503 Z" fill="#e01c78"/>
<path d="M52,321 C70,340 110,365 150,390 C200,420 250,460 290,503 L268,503 C230,468 190,440 150,412 C110,385 75,360 52,338 Z" fill="#e83a86"/>
<path d="M0,345 C18,334 35,325 52,321 C46,360 32,420 16,470 L0,485 Z" fill="#ea1058"/>
</svg><div class="t" style="left:305px;top:153.0px;font-size:56px;--w:56px;letter-spacing:0;color:#1a1a1a"><i>国</i><i>際</i><i>単</i><i>位</i><i>系</i></div><div class="t" style="left:114px;top:225px;font-size:32px;letter-spacing:3.15px;color:#333">SYSTÈME INTERNATIONAL D’UNITÉS</div><div class="t" style="left:209px;top:300.0px;font-size:28px;--w:30.2px;letter-spacing:0;color:#444"><i>北</i><i>里</i><i>大</i><i>学</i><i>　</i><i>一</i><i>般</i><i>教</i><i>育</i><i>部</i><i>　</i><i>情</i><i>報</i><i>科</i><i>学</i>A</div></div></div><div class="abs" style="left:35px;top:317px;width:178px;height:101px;border:3px solid #b9471f;border-radius:7px"></div><div class="thumb" style="top:320.5px;box-shadow:none;border-radius:3px"><div class="slide"><svg class="abs" style="left:0;top:0" width="893" height="120" viewBox="0 0 893 120">
<defs>
<linearGradient id="gmt2" gradientUnits="userSpaceOnUse" x1="0" y1="0" x2="8" y2="105">
 <stop offset="0" stop-color="#f400f4"/><stop offset="0.3" stop-color="#f018d0"/><stop offset="0.55" stop-color="#f02898"/><stop offset="0.8" stop-color="#f0306a"/><stop offset="1" stop-color="#e42e48"/>
</linearGradient>
<linearGradient id="gdt2" x1="0" y1="0" x2="1" y2="0">
 <stop offset="0" stop-color="#500010" stop-opacity="0"/><stop offset="0.35" stop-color="#500018" stop-opacity="0.55"/><stop offset="0.7" stop-color="#1a0010" stop-opacity="0.95"/><stop offset="1" stop-color="#000030"/>
</linearGradient>
<linearGradient id="gnt2" gradientUnits="userSpaceOnUse" x1="60" y1="0" x2="660" y2="0">
 <stop offset="0" stop-color="#800030" stop-opacity="0"/><stop offset="0.14" stop-color="#6a0028" stop-opacity="0.6"/><stop offset="0.28" stop-color="#3a0020"/><stop offset="0.45" stop-color="#0a0020"/><stop offset="0.62" stop-color="#000050"/><stop offset="0.72" stop-color="#1808c0"/><stop offset="0.8" stop-color="#5040f0"/><stop offset="0.88" stop-color="#90b0ff"/><stop offset="1" stop-color="#a0f4ff"/>
</linearGradient>
<linearGradient id="gct2" gradientUnits="userSpaceOnUse" x1="590" y1="0" x2="893" y2="0">
 <stop offset="0" stop-color="#d8fcff"/><stop offset="0.3" stop-color="#90f6ff"/><stop offset="0.65" stop-color="#30f0ff"/><stop offset="0.85" stop-color="#10e6fa"/><stop offset="1" stop-color="#40d8f0"/>
</linearGradient>
<linearGradient id="gcwt2" gradientUnits="userSpaceOnUse" x1="0" y1="5" x2="0" y2="38">
 <stop offset="0" stop-color="#ffffff" stop-opacity="0"/><stop offset="1" stop-color="#ffffff" stop-opacity="0.75"/>
</linearGradient>
<linearGradient id="gst2" x1="0" y1="0" x2="1" y2="0">
 <stop offset="0" stop-color="#000060"/><stop offset="1" stop-color="#1030b0"/>
</linearGradient>
<linearGradient id="gsht2" gradientUnits="userSpaceOnUse" x1="0" y1="0" x2="440" y2="0">
 <stop offset="0" stop-color="#c00030" stop-opacity="0.12"/><stop offset="0.35" stop-color="#900030" stop-opacity="0.22"/><stop offset="0.6" stop-color="#600028" stop-opacity="0.38"/><stop offset="1" stop-color="#300040" stop-opacity="0.5"/>
</linearGradient>
<linearGradient id="gsh2t2" gradientUnits="userSpaceOnUse" x1="80" y1="0" x2="380" y2="0">
 <stop offset="0" stop-color="#600020" stop-opacity="0"/><stop offset="0.45" stop-color="#500018" stop-opacity="0.4"/><stop offset="1" stop-color="#200018" stop-opacity="0.7"/>
</linearGradient>
<linearGradient id="gpu2t2" gradientUnits="userSpaceOnUse" x1="300" y1="0" x2="436" y2="0">
 <stop offset="0" stop-color="#e080ff" stop-opacity="0"/><stop offset="1" stop-color="#c890ff" stop-opacity="0.75"/>
</linearGradient>
<linearGradient id="gput2" gradientUnits="userSpaceOnUse" x1="250" y1="0" x2="436" y2="0">
 <stop offset="0" stop-color="#8000c0" stop-opacity="0"/><stop offset="1" stop-color="#8000d0" stop-opacity="0.7"/>
</linearGradient>
</defs>
<path d="M0,0 L660,0 C630,0.5 600,1 576,2 C540,5 500,9 466,12 C430,17 400,24 346,37.5 C330,42 280,55 226,67 C150,84 60,97 0,104.3 Z" fill="url(#gmt2)"/>
<path d="M0,90 C60,84 150,70 226,50 C280,36 330,22 390,6 L436,0 L660,0 C630,0.5 600,1 576,2 C540,5 500,9 466,12 C430,17 400,24 346,37.5 C330,42 280,55 226,67 C150,84 60,97 0,104.3 Z" fill="url(#gsht2)"/>
<path d="M80,93 C140,84 190,70 240,57 C300,40 340,30 380,20 L466,12 C430,17 400,24 346,37.5 C330,42 280,55 226,67 C170,80 120,89 80,95 Z" fill="url(#gsh2t2)"/>
<path d="M290,34 C350,20 390,9 420,0 L436,0 C380,12 330,24 290,34 Z" fill="url(#gput2)"/>
<path d="M300,0 L436,0 C420,4 405,8 392,12 C360,12 330,13 300,14 Z" fill="url(#gpu2t2)"/>
<path d="M0,33.3 C40,30.5 90,25.5 121,23 C170,19.5 210,17.5 246,16 C300,13.5 350,12.5 392,12.3 L392,17 C330,20 290,22.5 246,24.7 C200,26 160,26.5 121,27 C80,29 40,32 0,34 Z" fill="#ffffff" opacity="0.97"/>
<path d="M60,97 C120,87 175,68 226,50 C300,30 380,12 436,0 L660,0 C630,0.5 600,1 576,2 C540,5 500,9 466,12 C430,17 400,24 346,37.5 C330,42 280,55 226,67 C150,84 100,92 60,97 Z" fill="url(#gnt2)"/>
<path d="M590,0 L893,0 L893,38.5 C846,25 796,14 746,6 C700,2 650,1 590,0 Z" fill="url(#gct2)"/>
<path d="M700,2 C760,6 820,16 893,34 L893,38.5 C846,25 796,14 746,6 C720,4 710,3 700,2 Z" fill="url(#gcwt2)"/>
<path d="M843,0 L852,0 L893,19.5 L893,35.5 Z" fill="url(#gst2)"/>
<path d="M852,0 L893,0 L893,19.5 Z" fill="#3ccfe8"/>
</svg><div class="abs" style="left:58px;top:170.2px;width:4.6px;height:4.6px;border-radius:50%;background:#000"></div><div class="abs" style="left:58px;top:226.2px;width:4.6px;height:4.6px;border-radius:50%;background:#000"></div><div class="abs" style="left:58px;top:282.2px;width:4.6px;height:4.6px;border-radius:50%;background:#000"></div><div class="abs" style="left:91px;top:196.9px;width:4.2px;height:4.2px;border-radius:50%;background:#000"></div><div class="abs" style="left:91px;top:251.9px;width:4.2px;height:4.2px;border-radius:50%;background:#000"></div><div class="abs" style="left:91px;top:309.4px;width:4.2px;height:4.2px;border-radius:50%;background:#000"></div><svg class="abs" style="left:0;top:0" width="893" height="503"><path d="M95,363 L792,363 L805.5,377 L805.5,446.5 L109,446.5 L95,433 Z" fill="#e5224f" stroke="#b8183e" stroke-width="1"/></svg><div class="t" style="left:391.25px;top:80.50px;font-size:35.00px;--w:37.35px;color:#000000;font-weight:400;"><i>世</i><i>界</i><i>は</i><i>物</i><i>理</i><i>量</i><i>で</i><i>出</i><i>来</i><i>て</i><i>い</i><i>る</i></div><div class="t" style="left:74.08px;top:163.25px;font-size:18.50px;--w:20.59px;color:#000000;font-weight:400;"><i>世</i><i>界</i><i>は</i><i>色</i><i>々</i><i>な</i><i>「</i><i>も</i><i>の</i><i>」</i><i>で</i><i>構</i><i>成</i><i>さ</i><i>れ</i><i>て</i><i>い</i><i>る</i></div><div class="t" style="left:105.15px;top:189.50px;font-size:17.00px;--w:18.99px;color:#000000;font-weight:400;"><i>「</i><i>も</i><i>の</i><i>」</i><i>は</i><i>様</i><i>々</i><i>な</i><i>特</i><i>徴</i><i>を</i><i>持</i><i>つ</i></div><div class="t" style="left:73.08px;top:219.25px;font-size:18.50px;--w:20.64px;color:#000000;font-weight:400;"><i>人</i><i>間</i><i>が</i><i>世</i><i>界</i><i>を</i><i>理</i><i>解</i><i>す</i><i>る</i><i>や</i><i>り</i><i>方</i></div><div class="t" style="left:105.15px;top:244.50px;font-size:17.00px;--w:18.79px;color:#000000;font-weight:400;"><i>「</i><i>も</i><i>の</i><i>」</i><i>の</i><i>持</i><i>つ</i><i>特</i><i>徴</i><i>の</i><i>間</i><i>の</i><i>関</i><i>係</i><i>を</i><i>通</i><i>じ</i><i>て</i><i>理</i><i>解</i><i>す</i><i>る</i></div><div class="t" style="left:74.08px;top:275.25px;font-size:18.50px;--w:20.53px;color:#000000;font-weight:400;"><i>正</i><i>し</i><i>い</i><i>理</i><i>解</i><i>に</i><i>は</i><i>関</i><i>係</i><i>を</i><i>厳</i><i>密</i><i>な</i><i>形</i><i>で</i><i>表</i><i>す</i><i>必</i><i>要</i></div><div class="t" style="left:106.15px;top:302.50px;font-size:17.00px;--w:18.79px;color:#000000;font-weight:400;"><i>厳</i><i>密</i><i>に</i><i>扱</i><i>う</i><i>た</i><i>め</i><i>に</i><i>は</i><i>数</i><i>値</i><i>化</i><i>し</i><i>な</i><i>け</i><i>れ</i><i>ば</i><i>な</i><i>ら</i><i>な</i><i>い</i></div><div class="t" style="left:249.18px;top:394.25px;font-size:16.50px;--w:16.79px;color:#ffffff;font-weight:400;"><i>何</i><i>ら</i><i>か</i><i>の</i><i>方</i><i>法</i><i>で</i><i>数</i><i>値</i><i>化</i><i>で</i><i>き</i><i>る</i><i>特</i><i>徴</i><i>を</i><i>「</i><i>物</i><i>理</i><i>量</i><i>」</i><i>と</i><i>い</i><i>う</i></div></div></div><div class="thumb" style="top:442px"><div class="slide"><svg class="abs" style="left:0;top:0" width="893" height="120" viewBox="0 0 893 120">
<defs>
<linearGradient id="gmt3" gradientUnits="userSpaceOnUse" x1="0" y1="0" x2="8" y2="105">
 <stop offset="0" stop-color="#f400f4"/><stop offset="0.3" stop-color="#f018d0"/><stop offset="0.55" stop-color="#f02898"/><stop offset="0.8" stop-color="#f0306a"/><stop offset="1" stop-color="#e42e48"/>
</linearGradient>
<linearGradient id="gdt3" x1="0" y1="0" x2="1" y2="0">
 <stop offset="0" stop-color="#500010" stop-opacity="0"/><stop offset="0.35" stop-color="#500018" stop-opacity="0.55"/><stop offset="0.7" stop-color="#1a0010" stop-opacity="0.95"/><stop offset="1" stop-color="#000030"/>
</linearGradient>
<linearGradient id="gnt3" gradientUnits="userSpaceOnUse" x1="60" y1="0" x2="660" y2="0">
 <stop offset="0" stop-color="#800030" stop-opacity="0"/><stop offset="0.14" stop-color="#6a0028" stop-opacity="0.6"/><stop offset="0.28" stop-color="#3a0020"/><stop offset="0.45" stop-color="#0a0020"/><stop offset="0.62" stop-color="#000050"/><stop offset="0.72" stop-color="#1808c0"/><stop offset="0.8" stop-color="#5040f0"/><stop offset="0.88" stop-color="#90b0ff"/><stop offset="1" stop-color="#a0f4ff"/>
</linearGradient>
<linearGradient id="gct3" gradientUnits="userSpaceOnUse" x1="590" y1="0" x2="893" y2="0">
 <stop offset="0" stop-color="#d8fcff"/><stop offset="0.3" stop-color="#90f6ff"/><stop offset="0.65" stop-color="#30f0ff"/><stop offset="0.85" stop-color="#10e6fa"/><stop offset="1" stop-color="#40d8f0"/>
</linearGradient>
<linearGradient id="gcwt3" gradientUnits="userSpaceOnUse" x1="0" y1="5" x2="0" y2="38">
 <stop offset="0" stop-color="#ffffff" stop-opacity="0"/><stop offset="1" stop-color="#ffffff" stop-opacity="0.75"/>
</linearGradient>
<linearGradient id="gst3" x1="0" y1="0" x2="1" y2="0">
 <stop offset="0" stop-color="#000060"/><stop offset="1" stop-color="#1030b0"/>
</linearGradient>
<linearGradient id="gsht3" gradientUnits="userSpaceOnUse" x1="0" y1="0" x2="440" y2="0">
 <stop offset="0" stop-color="#c00030" stop-opacity="0.12"/><stop offset="0.35" stop-color="#900030" stop-opacity="0.22"/><stop offset="0.6" stop-color="#600028" stop-opacity="0.38"/><stop offset="1" stop-color="#300040" stop-opacity="0.5"/>
</linearGradient>
<linearGradient id="gsh2t3" gradientUnits="userSpaceOnUse" x1="80" y1="0" x2="380" y2="0">
 <stop offset="0" stop-color="#600020" stop-opacity="0"/><stop offset="0.45" stop-color="#500018" stop-opacity="0.4"/><stop offset="1" stop-color="#200018" stop-opacity="0.7"/>
</linearGradient>
<linearGradient id="gpu2t3" gradientUnits="userSpaceOnUse" x1="300" y1="0" x2="436" y2="0">
 <stop offset="0" stop-color="#e080ff" stop-opacity="0"/><stop offset="1" stop-color="#c890ff" stop-opacity="0.75"/>
</linearGradient>
<linearGradient id="gput3" gradientUnits="userSpaceOnUse" x1="250" y1="0" x2="436" y2="0">
 <stop offset="0" stop-color="#8000c0" stop-opacity="0"/><stop offset="1" stop-color="#8000d0" stop-opacity="0.7"/>
</linearGradient>
</defs>
<path d="M0,0 L660,0 C630,0.5 600,1 576,2 C540,5 500,9 466,12 C430,17 400,24 346,37.5 C330,42 280,55 226,67 C150,84 60,97 0,104.3 Z" fill="url(#gmt3)"/>
<path d="M0,90 C60,84 150,70 226,50 C280,36 330,22 390,6 L436,0 L660,0 C630,0.5 600,1 576,2 C540,5 500,9 466,12 C430,17 400,24 346,37.5 C330,42 280,55 226,67 C150,84 60,97 0,104.3 Z" fill="url(#gsht3)"/>
<path d="M80,93 C140,84 190,70 240,57 C300,40 340,30 380,20 L466,12 C430,17 400,24 346,37.5 C330,42 280,55 226,67 C170,80 120,89 80,95 Z" fill="url(#gsh2t3)"/>
<path d="M290,34 C350,20 390,9 420,0 L436,0 C380,12 330,24 290,34 Z" fill="url(#gput3)"/>
<path d="M300,0 L436,0 C420,4 405,8 392,12 C360,12 330,13 300,14 Z" fill="url(#gpu2t3)"/>
<path d="M0,33.3 C40,30.5 90,25.5 121,23 C170,19.5 210,17.5 246,16 C300,13.5 350,12.5 392,12.3 L392,17 C330,20 290,22.5 246,24.7 C200,26 160,26.5 121,27 C80,29 40,32 0,34 Z" fill="#ffffff" opacity="0.97"/>
<path d="M60,97 C120,87 175,68 226,50 C300,30 380,12 436,0 L660,0 C630,0.5 600,1 576,2 C540,5 500,9 466,12 C430,17 400,24 346,37.5 C330,42 280,55 226,67 C150,84 100,92 60,97 Z" fill="url(#gnt3)"/>
<path d="M590,0 L893,0 L893,38.5 C846,25 796,14 746,6 C700,2 650,1 590,0 Z" fill="url(#gct3)"/>
<path d="M700,2 C760,6 820,16 893,34 L893,38.5 C846,25 796,14 746,6 C720,4 710,3 700,2 Z" fill="url(#gcwt3)"/>
<path d="M843,0 L852,0 L893,19.5 L893,35.5 Z" fill="url(#gst3)"/>
<path d="M852,0 L893,0 L893,19.5 Z" fill="#3ccfe8"/>
</svg><div class="t" style="right:57px;top:80.0px;font-size:35px;--w:36.8px;letter-spacing:0;color:#222"><i>測</i><i>定</i><i>す</i><i>る</i><i>と</i><i>は</i><i>単</i><i>位</i><i>を</i><i>決</i><i>め</i><i>る</i><i>こ</i><i>と</i></div><div class="abs" style="left:58px;top:171.1px;width:5px;height:5px;border-radius:50%;background:#000"></div><div class="t" style="left:75px;top:161.85px;font-size:23.5px;--w:25.3px;letter-spacing:0;color:#222"><i>具</i><i>体</i><i>的</i><i>な</i><i>数</i><i>値</i><i>化</i><i>の</i><i>方</i><i>法</i></div><div class="abs" style="left:91px;top:201.0px;width:4px;height:4px;border-radius:50%;background:#000"></div><div class="t" style="left:106px;top:194.5px;font-size:17px;--w:18.6px;letter-spacing:0;color:#222"><i>同</i><i>じ</i><i>物</i><i>理</i><i>量</i><i>を</i><i>持</i><i>つ</i><i>も</i><i>の</i><i>ど</i><i>う</i><i>し</i><i>を</i><i>比</i><i>べ</i><i>る</i></div><div class="abs" style="left:58px;top:233.5px;width:5px;height:5px;border-radius:50%;background:#000"></div><div class="t" style="left:75px;top:224.25px;font-size:23.5px;--w:25.3px;letter-spacing:0;color:#222"><i>比</i><i>べ</i><i>る</i><i>も</i><i>の</i><i>よ</i><i>っ</i><i>て</i><i>違</i><i>い</i><i>が</i><i>生</i><i>じ</i><i>る</i></div><div class="abs" style="left:91px;top:262.0px;width:4px;height:4px;border-radius:50%;background:#000"></div><div class="t" style="left:106px;top:255.5px;font-size:17px;--w:18.6px;letter-spacing:0;color:#222"><i>比</i><i>べ</i><i>る</i><i>も</i><i>の</i><i>に</i><i>「</i><i>基</i><i>準</i><i>」</i><i>を</i><i>定</i><i>め</i><i>る</i></div><div class="abs" style="left:58px;top:294.5px;width:5px;height:5px;border-radius:50%;background:#000"></div><div class="t" style="left:75px;top:285.25px;font-size:23.5px;--w:25.3px;letter-spacing:0;color:#222"><i>こ</i><i>の</i><i>基</i><i>準</i><i>を</i><i>物</i><i>理</i><i>量</i><i>の</i><i>「</i><i>単</i><i>位</i><i>」</i><i>と</i><i>言</i><i>う</i></div><div class="abs" style="left:91px;top:323.0px;width:4px;height:4px;border-radius:50%;background:#000"></div><div class="t" style="left:106px;top:316.5px;font-size:17px;--w:18.6px;letter-spacing:0;color:#222"><i>「</i><i>測</i><i>定</i><i>」</i><i>と</i><i>は</i><i>単</i><i>位</i><i>と</i><i>の</i><i>比</i><i>率</i><i>を</i><i>調</i><i>べ</i><i>る</i><i>こ</i><i>と</i><i>で</i><i>あ</i><i>る</i></div></div></div><div class="thumb" style="top:563px"><div class="slide"><svg class="abs" style="left:0;top:0" width="893" height="120" viewBox="0 0 893 120">
<defs>
<linearGradient id="gmt4" gradientUnits="userSpaceOnUse" x1="0" y1="0" x2="8" y2="105">
 <stop offset="0" stop-color="#f400f4"/><stop offset="0.3" stop-color="#f018d0"/><stop offset="0.55" stop-color="#f02898"/><stop offset="0.8" stop-color="#f0306a"/><stop offset="1" stop-color="#e42e48"/>
</linearGradient>
<linearGradient id="gdt4" x1="0" y1="0" x2="1" y2="0">
 <stop offset="0" stop-color="#500010" stop-opacity="0"/><stop offset="0.35" stop-color="#500018" stop-opacity="0.55"/><stop offset="0.7" stop-color="#1a0010" stop-opacity="0.95"/><stop offset="1" stop-color="#000030"/>
</linearGradient>
<linearGradient id="gnt4" gradientUnits="userSpaceOnUse" x1="60" y1="0" x2="660" y2="0">
 <stop offset="0" stop-color="#800030" stop-opacity="0"/><stop offset="0.14" stop-color="#6a0028" stop-opacity="0.6"/><stop offset="0.28" stop-color="#3a0020"/><stop offset="0.45" stop-color="#0a0020"/><stop offset="0.62" stop-color="#000050"/><stop offset="0.72" stop-color="#1808c0"/><stop offset="0.8" stop-color="#5040f0"/><stop offset="0.88" stop-color="#90b0ff"/><stop offset="1" stop-color="#a0f4ff"/>
</linearGradient>
<linearGradient id="gct4" gradientUnits="userSpaceOnUse" x1="590" y1="0" x2="893" y2="0">
 <stop offset="0" stop-color="#d8fcff"/><stop offset="0.3" stop-color="#90f6ff"/><stop offset="0.65" stop-color="#30f0ff"/><stop offset="0.85" stop-color="#10e6fa"/><stop offset="1" stop-color="#40d8f0"/>
</linearGradient>
<linearGradient id="gcwt4" gradientUnits="userSpaceOnUse" x1="0" y1="5" x2="0" y2="38">
 <stop offset="0" stop-color="#ffffff" stop-opacity="0"/><stop offset="1" stop-color="#ffffff" stop-opacity="0.75"/>
</linearGradient>
<linearGradient id="gst4" x1="0" y1="0" x2="1" y2="0">
 <stop offset="0" stop-color="#000060"/><stop offset="1" stop-color="#1030b0"/>
</linearGradient>
<linearGradient id="gsht4" gradientUnits="userSpaceOnUse" x1="0" y1="0" x2="440" y2="0">
 <stop offset="0" stop-color="#c00030" stop-opacity="0.12"/><stop offset="0.35" stop-color="#900030" stop-opacity="0.22"/><stop offset="0.6" stop-color="#600028" stop-opacity="0.38"/><stop offset="1" stop-color="#300040" stop-opacity="0.5"/>
</linearGradient>
<linearGradient id="gsh2t4" gradientUnits="userSpaceOnUse" x1="80" y1="0" x2="380" y2="0">
 <stop offset="0" stop-color="#600020" stop-opacity="0"/><stop offset="0.45" stop-color="#500018" stop-opacity="0.4"/><stop offset="1" stop-color="#200018" stop-opacity="0.7"/>
</linearGradient>
<linearGradient id="gpu2t4" gradientUnits="userSpaceOnUse" x1="300" y1="0" x2="436" y2="0">
 <stop offset="0" stop-color="#e080ff" stop-opacity="0"/><stop offset="1" stop-color="#c890ff" stop-opacity="0.75"/>
</linearGradient>
<linearGradient id="gput4" gradientUnits="userSpaceOnUse" x1="250" y1="0" x2="436" y2="0">
 <stop offset="0" stop-color="#8000c0" stop-opacity="0"/><stop offset="1" stop-color="#8000d0" stop-opacity="0.7"/>
</linearGradient>
</defs>
<path d="M0,0 L660,0 C630,0.5 600,1 576,2 C540,5 500,9 466,12 C430,17 400,24 346,37.5 C330,42 280,55 226,67 C150,84 60,97 0,104.3 Z" fill="url(#gmt4)"/>
<path d="M0,90 C60,84 150,70 226,50 C280,36 330,22 390,6 L436,0 L660,0 C630,0.5 600,1 576,2 C540,5 500,9 466,12 C430,17 400,24 346,37.5 C330,42 280,55 226,67 C150,84 60,97 0,104.3 Z" fill="url(#gsht4)"/>
<path d="M80,93 C140,84 190,70 240,57 C300,40 340,30 380,20 L466,12 C430,17 400,24 346,37.5 C330,42 280,55 226,67 C170,80 120,89 80,95 Z" fill="url(#gsh2t4)"/>
<path d="M290,34 C350,20 390,9 420,0 L436,0 C380,12 330,24 290,34 Z" fill="url(#gput4)"/>
<path d="M300,0 L436,0 C420,4 405,8 392,12 C360,12 330,13 300,14 Z" fill="url(#gpu2t4)"/>
<path d="M0,33.3 C40,30.5 90,25.5 121,23 C170,19.5 210,17.5 246,16 C300,13.5 350,12.5 392,12.3 L392,17 C330,20 290,22.5 246,24.7 C200,26 160,26.5 121,27 C80,29 40,32 0,34 Z" fill="#ffffff" opacity="0.97"/>
<path d="M60,97 C120,87 175,68 226,50 C300,30 380,12 436,0 L660,0 C630,0.5 600,1 576,2 C540,5 500,9 466,12 C430,17 400,24 346,37.5 C330,42 280,55 226,67 C150,84 100,92 60,97 Z" fill="url(#gnt4)"/>
<path d="M590,0 L893,0 L893,38.5 C846,25 796,14 746,6 C700,2 650,1 590,0 Z" fill="url(#gct4)"/>
<path d="M700,2 C760,6 820,16 893,34 L893,38.5 C846,25 796,14 746,6 C720,4 710,3 700,2 Z" fill="url(#gcwt4)"/>
<path d="M843,0 L852,0 L893,19.5 L893,35.5 Z" fill="url(#gst4)"/>
<path d="M852,0 L893,0 L893,19.5 Z" fill="#3ccfe8"/>
</svg><div class="t" style="right:57px;top:80.0px;font-size:35px;--w:36.8px;letter-spacing:0;color:#222"><i>共</i><i>通</i><i>の</i><i>単</i><i>位</i><i>を</i><i>決</i><i>め</i><i>よ</i><i>う</i></div><div class="abs" style="left:58px;top:165.2px;width:4.6px;height:4.6px;border-radius:50%;background:#000"></div><div class="t" style="left:75px;top:158.25px;font-size:18.5px;--w:20.0px;letter-spacing:0;color:#222"><i>そ</i><i>れ</i><i>ぞ</i><i>れ</i><i>の</i><i>物</i><i>理</i><i>量</i><i>の</i><i>単</i><i>位</i><i>は</i><i>勝</i><i>手</i><i>に</i><i>決</i><i>め</i><i>る</i><i>こ</i><i>と</i><i>が</i><i>で</i><i>き</i><i>る</i></div><div class="abs" style="left:58px;top:195.7px;width:4.6px;height:4.6px;border-radius:50%;background:#000"></div><div class="t" style="left:75px;top:188.75px;font-size:18.5px;--w:20.0px;letter-spacing:0;color:#222"><i>異</i><i>な</i><i>る</i><i>単</i><i>位</i><i>で</i><i>は</i><i>量</i><i>が</i><i>同</i><i>じ</i><i>で</i><i>は</i><i>な</i><i>い</i></div><div class="abs" style="left:58px;top:226.1px;width:4.6px;height:4.6px;border-radius:50%;background:#000"></div><div class="t" style="left:75px;top:219.15px;font-size:18.5px;--w:20.0px;letter-spacing:0;color:#222"><i>公</i><i>正</i><i>な</i><i>量</i><i>を</i><i>比</i><i>べ</i><i>る</i><i>場</i><i>合</i><i>に</i><i>共</i><i>通</i><i>の</i><i>単</i><i>位</i><i>の</i><i>設</i><i>定</i><i>が</i><i>必</i><i>要</i></div><div class="abs" style="left:58px;top:256.59999999999997px;width:4.6px;height:4.6px;border-radius:50%;background:#000"></div><div class="t" style="left:75px;top:249.64999999999998px;font-size:18.5px;--w:20.0px;letter-spacing:0;color:#222"><i>国</i><i>際</i><i>単</i><i>位</i><i>系</i><i>の</i><i>設</i><i>定</i></div></div></div><svg class="abs" style="left:0;top:0" width="1178" height="978"><rect x="1159.6" y="181" width="16.8" height="717" rx="8" fill="#f4f4f4"/><path d="M1164,192.5 L1173,192.5 L1168.5,186 Z" fill="#858585"/><rect x="1164" y="368" width="9" height="171" rx="4.5" fill="#858585"/><path d="M1164,886 L1173,886 L1168.5,893 Z" fill="#858585"/><path d="M1164,906 L1168.5,900 L1173,906 Z M1164,911 L1168.5,905 L1173,911 Z" fill="#858585"/><path d="M1164,917 L1173,917 L1168.5,923 Z M1164,922 L1173,922 L1168.5,928 Z" fill="#858585"/></svg><div class="abs" style="left:0;top:955px;width:1178px;height:23px;background:#f3f3f3;border-top:1px solid #fbfbfb;box-sizing:border-box"></div><div class="abs" style="left:803px;top:956px;width:40px;height:21px;background:#dedede"></div><svg class="abs" style="left:0;top:0" width="1178" height="978"><path d="M91.5,971.5 H85.5 V960.5 H97.5 V966 M91.5,960.5 V971.5" fill="none" stroke="#303030" stroke-width="1"/><path d="M92.5,967 L99,973.5 M99,967 L92.5,973.5" stroke="#303030" stroke-width="1"/><circle cx="175" cy="961.6" r="1.7" fill="none" stroke="#303030" stroke-width="1"/><path d="M169.8,961.5 C171,963.5 172.5,964.3 175,964.3 C177.5,964.3 179,963.5 180.2,961.5 M175,964.3 C175,967 174,968.5 172.8,970 C172,971 172.5,972.3 173.8,972.2" fill="none" stroke="#303030" stroke-width="1" stroke-linecap="round"/><path d="M177.5,969.8 L179.5,971.8 L183.8,967.2" fill="none" stroke="#303030" stroke-width="1" stroke-linecap="round" stroke-linejoin="round"/><path d="M744.5,960.5 L747.5,958 L750.5,960.5" fill="none" stroke="#424242" stroke-width="1"/><path d="M740,964.5 H756 M740,968.5 H756 M740,972.5 H756" stroke="#424242" stroke-width="1"/><rect x="816.5" y="960" width="13.5" height="11.5" fill="none" stroke="#424242" stroke-width="1"/><path d="M818.8,960 V971.5" stroke="#424242" stroke-width="1"/><rect x="821" y="962.5" width="6.5" height="4" fill="none" stroke="#424242" stroke-width="1"/><rect x="856.5" y="960.5" width="5.5" height="4.5" fill="none" stroke="#424242" stroke-width="1"/><rect x="864.5" y="960.5" width="5.5" height="4.5" fill="none" stroke="#424242" stroke-width="1"/><rect x="856.5" y="967.5" width="5.5" height="4.5" fill="none" stroke="#424242" stroke-width="1"/><rect x="864.5" y="967.5" width="5.5" height="4.5" fill="none" stroke="#424242" stroke-width="1"/><path d="M896,961 H902.5 V972 H896 Z M902.5,961 H909 V972 H902.5" fill="none" stroke="#424242" stroke-width="1"/><path d="M897.5,964 H901 M897.5,966.5 H901 M897.5,969 H901 M904,964 H907.5 M904,966.5 H907.5 M904,969 H907.5" stroke="#424242" stroke-width="0.8"/><path d="M936.5,960 H949 M937.5,960 V967.5 H948 V960 M942.7,967.5 V972.5 M939.5,973 H946" fill="none" stroke="#424242" stroke-width="1"/><path d="M940,962.5 H945.5" stroke="#424242" stroke-width="1"/><path d="M969,965.8 H976.5" stroke="#424242" stroke-width="1.1"/><rect x="982.2" y="965.5" width="99.6" height="1" fill="#6a6a6a"/><rect x="1032" y="962.5" width="1" height="7" fill="#6a6a6a"/><rect x="1014" y="961" width="5" height="11" rx="1" fill="#5e5e5e"/><path d="M1087.3,966 H1094.7 M1091,962 V970" stroke="#424242" stroke-width="1.1"/><rect x="1150.5" y="962" width="7" height="7" fill="none" stroke="#242424" stroke-width="1.1"/><path d="M1151.8,960 L1154,957.8 L1156.2,960 M1151.8,971 L1154,973.2 L1156.2,971 M1148.5,963.3 L1146.3,965.5 L1148.5,967.7 M1159.5,963.3 L1161.7,965.5 L1159.5,967.7" fill="none" stroke="#242424" stroke-width="1"/></svg><svg class="abs" style="left:0;top:0;z-index:3" width="1178" height="80"><circle cx="25" cy="25" r="8" fill="#ed6c47"/><path d="M25,17 A8,8 0 0 1 33,25 H25 Z" fill="#ff8f6b"/><path d="M17,25 A8,8 0 0 0 33,25 Z" fill="#d35230"/><rect x="17" y="20" width="11" height="11" rx="1" fill="#c43e1c"/><text x="19.6" y="29" font-family="Liberation Sans" font-weight="700" font-size="9" fill="#fff">P</text><rect x="104.7" y="14.7" width="44.6" height="18.6" rx="9.3" fill="#fdfdfd" stroke="#5f5f5f" stroke-width="1.1"/><circle cx="114.1" cy="24" r="6.6" fill="#5f5f5f"/><path d="M163.5,17.5 H178.5 V32.5 H165.5 L163.5,30.5 Z" fill="#dc94e2" stroke="#9a2eae" stroke-width="1.1"/><rect x="167" y="18" width="8" height="5.5" fill="#fafafa" stroke="#9a2eae" stroke-width="1"/><rect x="167" y="27" width="8" height="5.5" fill="#fafafa" stroke="#9a2eae" stroke-width="1"/><path d="M458.3,23.3 L461.8,27.3 L465.3,23.3" fill="none" stroke="#1f1f1f" stroke-width="1.3" stroke-linecap="round" stroke-linejoin="round"/><rect x="490" y="10.5" width="314.5" height="30" rx="4" fill="#fafafa" stroke="#e3e3e3" stroke-width="1"/><path d="M494,40.5 H800.5" stroke="#c9c9c9" stroke-width="1"/><circle cx="519.5" cy="22.5" r="4.6" fill="none" stroke="#616161" stroke-width="1.1"/><path d="M516.2,25.8 L510.6,31.5" stroke="#616161" stroke-width="1.2" stroke-linecap="round"/><circle cx="963" cy="25" r="12" fill="#d4d4d4"/><circle cx="963" cy="21.5" r="3.6" fill="none" stroke="#424242" stroke-width="1.1"/><path d="M956.5,31.5 C957,27.5 959.5,25.7 963,25.7 C966.5,25.7 969,27.5 969.5,31.5" fill="none" stroke="#424242" stroke-width="1.1"/><path d="M1002.6,30.3 L1011,18.8 L1016.2,23.8 L1004.3,32 Z" fill="#fafafa" stroke="#242424" stroke-width="1.1" stroke-linejoin="round"/><path d="M1008.2,30 C1008,32 1010.5,32.5 1011.5,31 C1012,30 1011.8,28.5 1011.6,27.8" fill="none" stroke="#242424" stroke-width="1.1"/><path d="M1013.4,17 V18.7 M1015.4,19.5 L1017.6,17.4 M1016.3,21.5 H1018" stroke="#1a86d8" stroke-width="1.1" stroke-linecap="round"/><path d="M1052,24.5 H1062" stroke="#1f1f1f" stroke-width="1"/><rect x="1100.2" y="20.2" width="9.6" height="9.6" rx="1.5" fill="none" stroke="#1f1f1f" stroke-width="1"/><path d="M1148,20 L1158,30 M1158,20 L1148,30" stroke="#1f1f1f" stroke-width="1"/><rect x="68" y="74" width="33" height="2.3" rx="1.1" fill="#c43e1c"/><rect x="1052.5" y="52.5" width="31" height="23" rx="4" fill="#fdfdfd" stroke="#8d8d8d" stroke-width="1"/><path d="M1061.5,59.5 H1071 V66.5 H1065 L1062.5,69 V66.5 H1061.5 Z" fill="none" stroke="#242424" stroke-width="1" stroke-linejoin="round"/><rect x="1092" y="52" width="73" height="24" rx="4" fill="#c43e1c"/><path d="M1100.5,62.5 V69.5 H1109.5 V66.5" fill="none" stroke="#fff" stroke-width="1.1"/><path d="M1102.5,67 C1103,62.5 1105.5,60.5 1109,60.5 M1106.8,58 L1109.5,60.5 L1107,63.2" fill="none" stroke="#fff" stroke-width="1.1" stroke-linecap="round" stroke-linejoin="round"/><path d="M1153.5,62.199999999999996 L1156.5,65.39999999999999 L1159.5,62.199999999999996" fill="none" stroke="#ffffff" stroke-width="1.2" stroke-linecap="round" stroke-linejoin="round"/></svg><div style="position:absolute;left:0;top:0;z-index:5"><div class="t" id="autosave" style="left:47.35px;top:17.50px;font-size:13.00px;--w:12.10px;color:#1f1f1f;font-weight:400;"><i>自</i><i>動</i><i>保</i><i>存</i></div><div class="t" id="off" style="left:126.35px;top:16.50px;font-size:13.00px;--w:11.05px;color:#333333;font-weight:400;transform:scaleX(0.8079);transform-origin:0 0;"><i>オ</i><i>フ</i></div><div class="t" id="fname" style="left:199.32px;top:19.25px;font-size:13.50px;--w:13.50px;color:#1f1f1f;font-weight:400;transform:scaleX(0.9321);transform-origin:0 0;">ppt-sample1-temp.pptx • <i>こ</i><i>の</i> PC <i>に</i><i>保</i><i>存</i><i>済</i><i>み</i></div><div class="t" id="search" style="left:538.35px;top:18.50px;font-size:13.00px;--w:13.30px;color:#616161;font-weight:400;"><i>検</i><i>索</i></div><div class="t" id="user" style="left:888.35px;top:18.50px;font-size:13.00px;--w:11.71px;color:#1f1f1f;font-weight:400;"><i>吉</i><i>田</i> <i>勝</i><i>彦</i></div><div class="t" id="tab0" style="left:12.35px;top:58.50px;font-size:13.00px;--w:11.05px;color:#242424;font-weight:400;transform:scaleX(0.8206);transform-origin:0 0;"><i>フ</i><i>ァ</i><i>イ</i><i>ル</i></div><div class="t" id="tab1" style="left:362.35px;top:59.00px;font-size:13.00px;--w:11.05px;color:#242424;font-weight:400;transform:scaleX(0.8933);transform-origin:0 0;"><i>ア</i><i>ニ</i><i>メ</i><i>ー</i><i>シ</i><i>ョ</i><i>ン</i></div><div class="t" id="tab2" style="left:120.35px;top:59.50px;font-size:13.00px;--w:12.52px;color:#242424;font-weight:400;"><i>挿</i><i>入</i></div><div class="t" id="tab3" style="left:165.35px;top:59.50px;font-size:13.00px;--w:12.52px;color:#242424;font-weight:400;"><i>描</i><i>画</i></div><div class="t" id="tab4" style="left:209.35px;top:59.00px;font-size:13.00px;--w:11.05px;color:#242424;font-weight:400;transform:scaleX(0.9484);transform-origin:0 0;"><i>デ</i><i>ザ</i><i>イ</i><i>ン</i></div><div class="t" id="tab5" style="left:272.35px;top:59.50px;font-size:13.00px;--w:11.74px;color:#242424;font-weight:400;"><i>画</i><i>面</i><i>切</i><i>り</i><i>替</i><i>え</i></div><div class="t" id="tab6" style="left:455.35px;top:58.50px;font-size:13.00px;--w:11.05px;color:#242424;font-weight:400;transform:scaleX(0.8657);transform-origin:0 0;"><i>ス</i><i>ラ</i><i>イ</i><i>ド</i> <i>シ</i><i>ョ</i><i>ー</i></div><div class="t" id="tab7" style="left:548.35px;top:59.50px;font-size:13.00px;--w:13.72px;color:#242424;font-weight:400;"><i>記</i><i>録</i></div><div class="t" id="tab8" style="left:593.35px;top:59.00px;font-size:13.00px;--w:12.52px;color:#242424;font-weight:400;"><i>校</i><i>閲</i></div><div class="t" id="tab9" style="left:637.35px;top:59.50px;font-size:13.00px;--w:13.54px;color:#242424;font-weight:400;"><i>表</i><i>示</i></div><div class="t" id="tab10" style="left:682.35px;top:60.00px;font-size:13.00px;--w:11.05px;color:#242424;font-weight:400;transform:scaleX(0.9343);transform-origin:0 0;"><i>ヘ</i><i>ル</i><i>プ</i></div><div class="t" id="tabhome" style="left:68.35px;top:58.50px;font-size:13.00px;--w:11.05px;color:#242424;font-weight:700;transform:scaleX(0.9825);transform-origin:0 0;"><i>ホ</i><i>ー</i><i>ム</i></div><div class="t" id="share" style="left:1116.33px;top:58.25px;font-size:13.50px;--w:11.47px;color:#ffffff;font-weight:700;"><i>共</i><i>有</i></div><div class="t" id="undo_l" style="left:18.40px;top:163.50px;font-size:12.00px;--w:10.82px;color:#242424;font-weight:400;"><i>元</i><i>に</i><i>戻</i><i>す</i></div><div class="t" id="paste" style="left:78.40px;top:123.50px;font-size:12.00px;--w:10.20px;color:#242424;font-weight:400;"><i>貼</i><i>り</i><i>付</i><i>け</i></div><div class="t" id="clip_l" style="left:83.40px;top:163.50px;font-size:12.00px;--w:10.20px;color:#242424;font-weight:400;transform:scaleX(0.8472);transform-origin:0 0;"><i>ク</i><i>リ</i><i>ッ</i><i>プ</i><i>ボ</i><i>ー</i><i>ド</i></div><div class="t" id="newsl1" style="left:191.40px;top:123.00px;font-size:12.00px;--w:10.38px;color:#242424;font-weight:400;"><i>新</i><i>し</i><i>い</i></div><div class="t" id="newsl2" style="left:182.40px;top:137.50px;font-size:12.00px;--w:10.20px;color:#242424;font-weight:400;transform:scaleX(0.8487);transform-origin:0 0;"><i>ス</i><i>ラ</i><i>イ</i><i>ド</i></div><div class="t" id="slide_l" style="left:210.40px;top:163.00px;font-size:12.00px;--w:10.20px;color:#242424;font-weight:400;transform:scaleX(0.8601);transform-origin:0 0;"><i>ス</i><i>ラ</i><i>イ</i><i>ド</i></div><div class="t" id="size18" style="left:458.45px;top:97.50px;font-size:11.00px;--w:11.00px;color:#c2b8a8;font-weight:400;transform:scaleX(1.1943);transform-origin:0 0;">18</div><div class="t" id="font_l" style="left:414.40px;top:164.00px;font-size:12.00px;--w:10.20px;color:#242424;font-weight:400;transform:scaleX(0.8180);transform-origin:0 0;"><i>フ</i><i>ォ</i><i>ン</i><i>ト</i></div><div class="t" id="para_l" style="left:690.40px;top:163.00px;font-size:12.00px;--w:13.62px;color:#242424;font-weight:400;"><i>段</i><i>落</i></div><div class="t" id="shape" style="left:844.40px;top:122.00px;font-size:12.00px;--w:13.08px;color:#242424;font-weight:400;"><i>図</i><i>形</i></div><div class="t" id="arrange" style="left:887.40px;top:122.50px;font-size:12.00px;--w:13.20px;color:#242424;font-weight:400;"><i>配</i><i>置</i></div><div class="t" id="qs1" style="left:932.40px;top:123.00px;font-size:12.00px;--w:10.20px;color:#a6a6a6;font-weight:400;transform:scaleX(0.8071);transform-origin:0 0;"><i>ク</i><i>イ</i><i>ッ</i><i>ク</i></div><div class="t" id="qs2" style="left:924.40px;top:137.00px;font-size:12.00px;--w:10.20px;color:#a6a6a6;font-weight:400;transform:scaleX(0.8258);transform-origin:0 0;"><i>ス</i><i>タ</i><i>イ</i><i>ル</i></div><div class="t" id="draw_l" style="left:894.40px;top:163.50px;font-size:12.00px;--w:12.46px;color:#242424;font-weight:400;"><i>図</i><i>形</i><i>描</i><i>画</i></div><div class="t" id="find" style="left:1059.40px;top:89.50px;font-size:12.00px;--w:12.36px;color:#242424;font-weight:400;"><i>検</i><i>索</i></div><div class="t" id="replace" style="left:1059.40px;top:115.00px;font-size:12.00px;--w:12.30px;color:#242424;font-weight:400;"><i>置</i><i>換</i></div><div class="t" id="select" style="left:1059.40px;top:141.50px;font-size:12.00px;--w:12.30px;color:#242424;font-weight:400;"><i>選</i><i>択</i></div><div class="t" id="edit_l" style="left:1059.40px;top:163.50px;font-size:12.00px;--w:12.30px;color:#242424;font-weight:400;"><i>編</i><i>集</i></div><div class="t" id="st_slide" style="left:7.45px;top:961.00px;font-size:11.00px;--w:11.00px;color:#242424;font-weight:400;transform:scaleX(0.9341);transform-origin:0 0;"><i>ス</i><i>ラ</i><i>イ</i><i>ド</i> 2/4</div><div class="t" id="st_lang" style="left:114.38px;top:960.25px;font-size:12.50px;--w:12.28px;color:#242424;font-weight:400;"><i>日</i><i>本</i><i>語</i></div><div class="t" id="st_acc" style="left:186.45px;top:961.00px;font-size:11.00px;--w:9.45px;color:#242424;font-weight:400;"><i>ア</i><i>ク</i><i>セ</i><i>シ</i><i>ビ</i><i>リ</i><i>テ</i><i>ィ</i>: <i>問</i><i>題</i><i>あ</i><i>り</i><i>ま</i><i>せ</i><i>ん</i></div><div class="t" id="st_note" style="left:756.45px;top:960.50px;font-size:11.00px;--w:9.96px;color:#242424;font-weight:400;"><i>ノ</i><i>ー</i><i>ト</i></div><div class="t" id="st_zoom" style="left:1107.38px;top:961.25px;font-size:12.50px;--w:12.50px;color:#242424;font-weight:400;transform:scaleX(0.9857);transform-origin:0 0;">70%</div><div class="t" id="n1" style="left:14.25px;top:195.00px;font-size:15.00px;--w:15.00px;color:#424242;font-weight:400;transform:scaleX(1.0907);transform-origin:0 0;">1</div><div class="t" id="n2" style="left:13.25px;top:317.00px;font-size:15.00px;--w:15.00px;color:#c43e1c;font-weight:400;transform:scaleX(1.1885);transform-origin:0 0;">2</div><div class="t" id="n3" style="left:13.25px;top:437.00px;font-size:15.00px;--w:15.00px;color:#424242;font-weight:400;transform:scaleX(1.1885);transform-origin:0 0;">3</div><div class="t" id="n4" style="left:14.25px;top:559.00px;font-size:15.00px;--w:15.00px;color:#424242;font-weight:400;transform:scaleX(0.9100);transform-origin:0 0;">4</div></div><div id="border"></div></div></body></html>
